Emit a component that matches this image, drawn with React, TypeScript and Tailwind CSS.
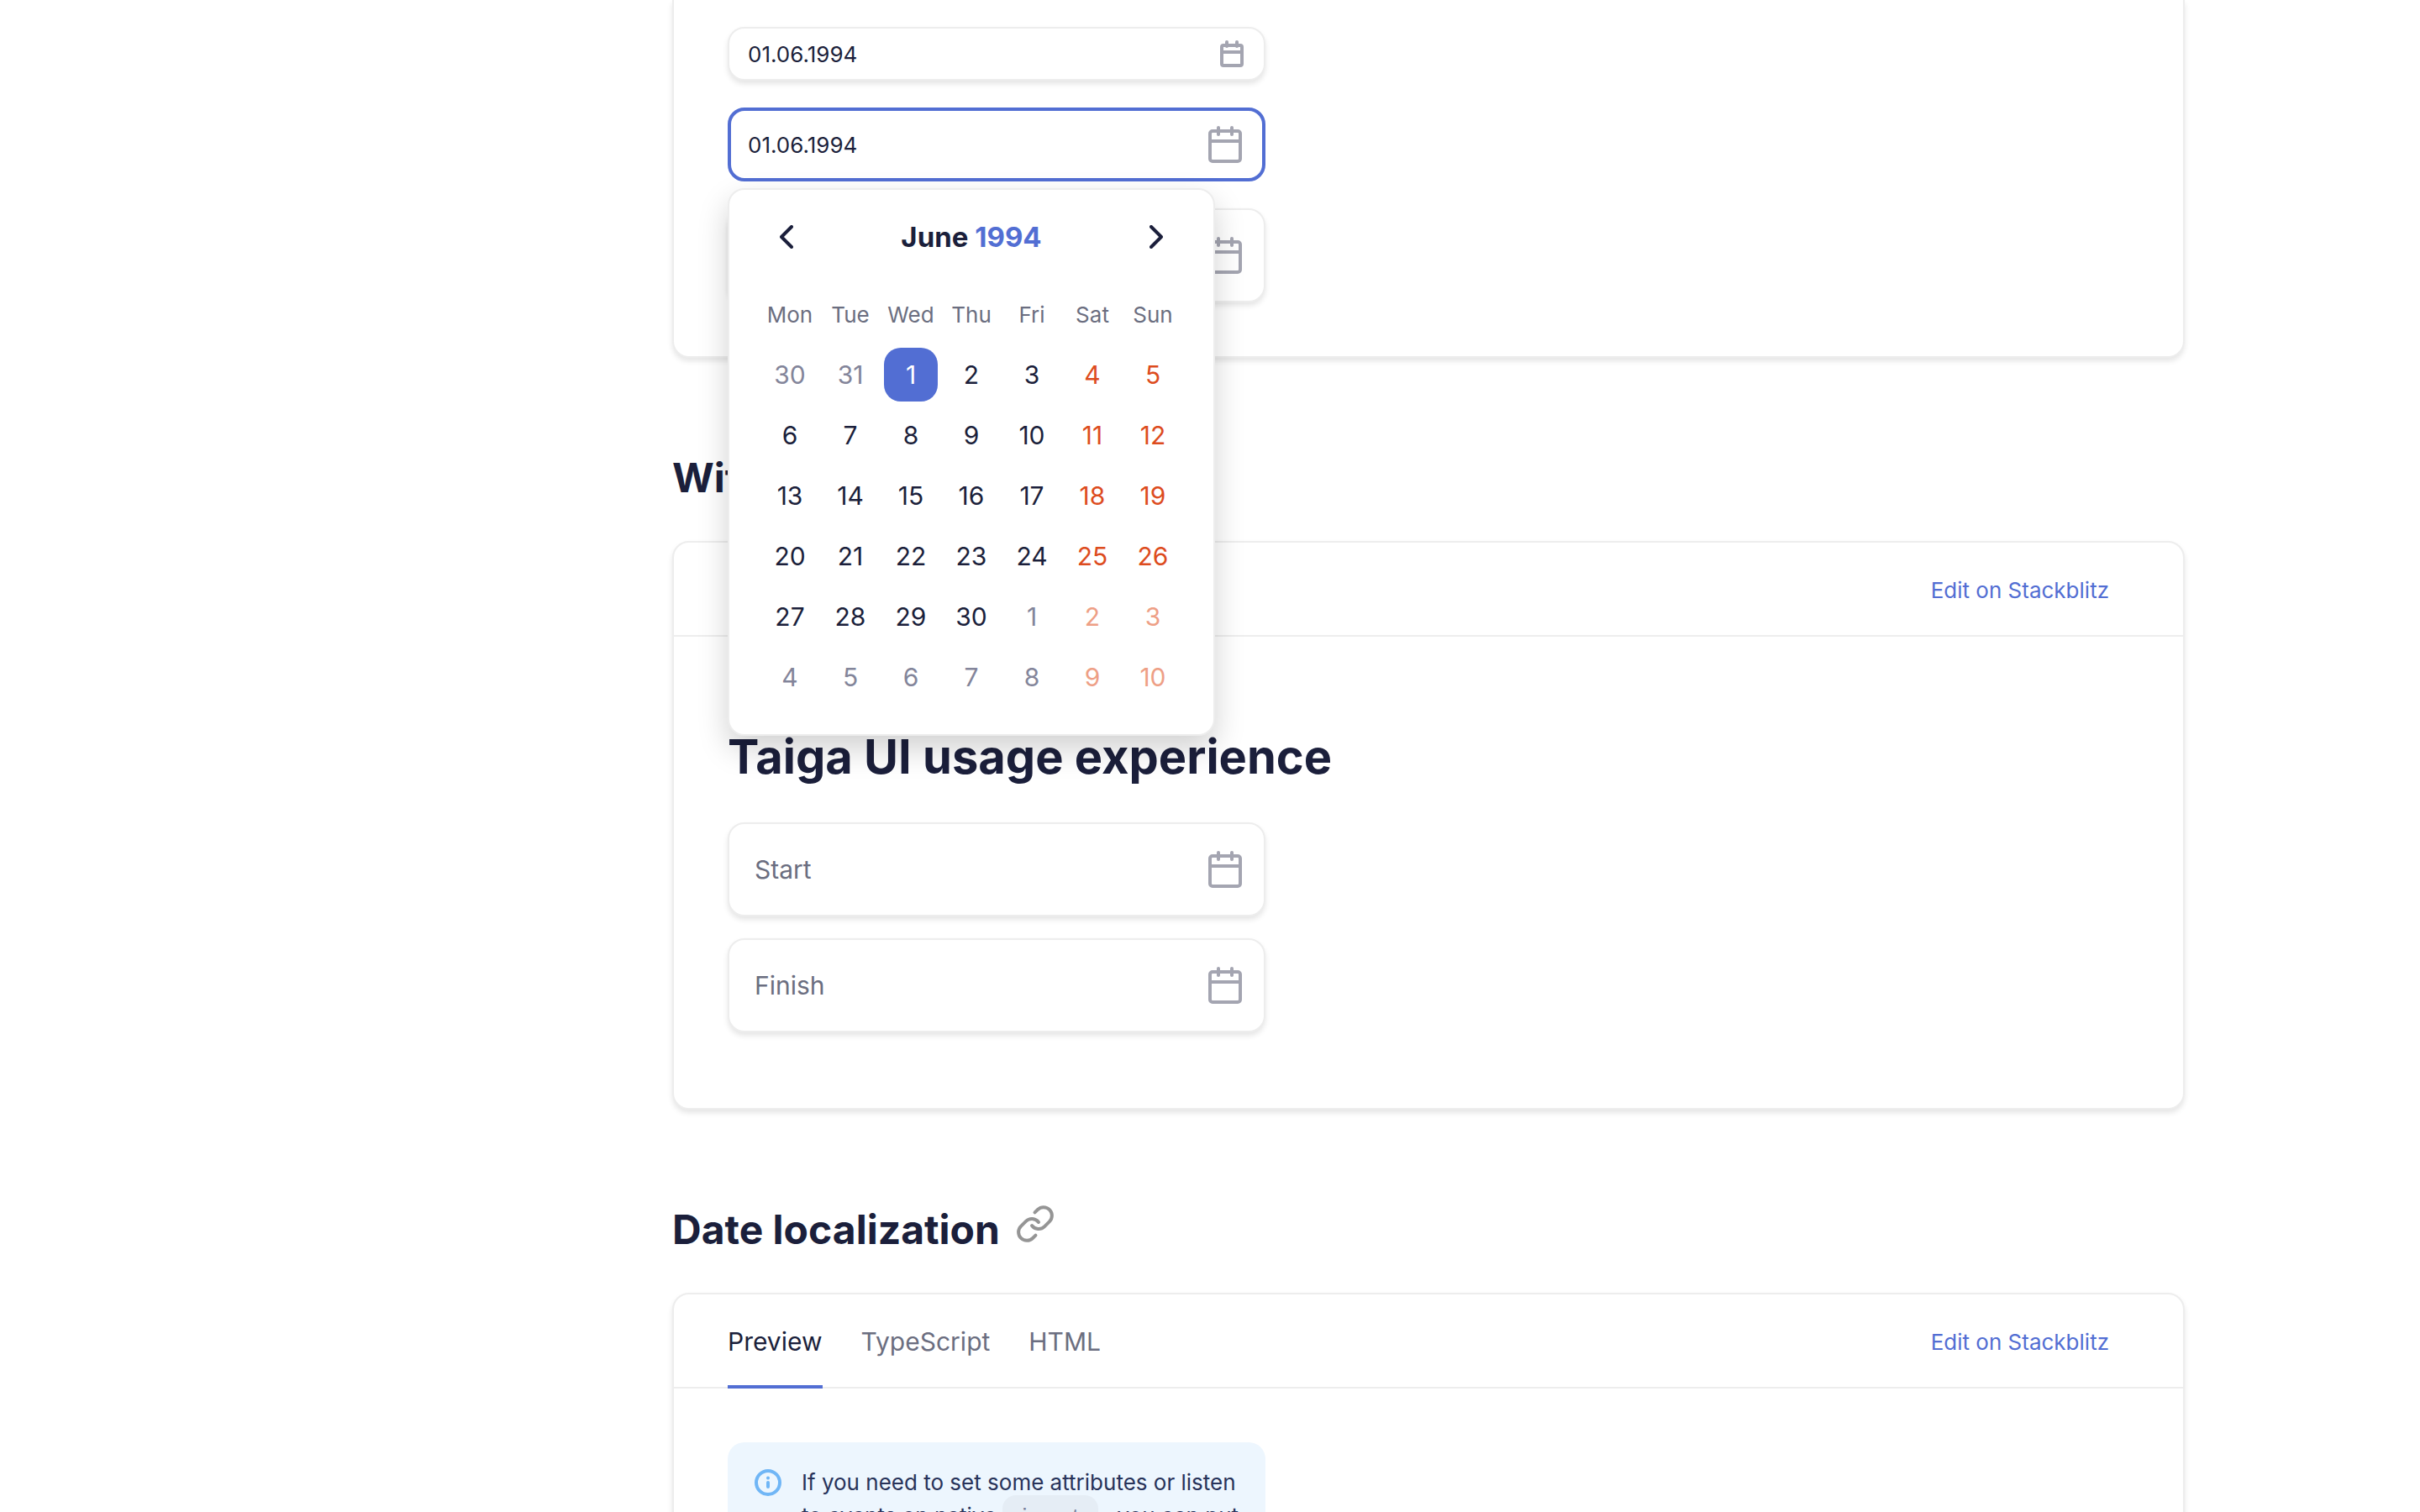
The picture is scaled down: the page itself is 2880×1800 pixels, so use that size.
import React from 'react'
import { Link as LinkIcon } from 'lucide-react'

const WEEKDAYS = ['Mon', 'Tue', 'Wed', 'Thu', 'Fri', 'Sat', 'Sun']
const WEEKS = [
  [30, 31, 1, 2, 3, 4, 5],
  [6, 7, 8, 9, 10, 11, 12],
  [13, 14, 15, 16, 17, 18, 19],
  [20, 21, 22, 23, 24, 25, 26],
  [27, 28, 29, 30, 1, 2, 3],
  [4, 5, 6, 7, 8, 9, 10],
]

function CalendarIcon({ small = false }: { small?: boolean }) {
  if (small) {
    return (
      <svg className="h-8 w-7" viewBox="0 0 28 32" fill="none" stroke="currentColor" strokeWidth="4" aria-hidden="true">
        <rect x="2" y="6" width="24" height="24" rx="2" />
        <path d="M2 14h24" />
        <path d="M8 2v5M20 2v5" strokeLinecap="round" />
      </svg>
    )
  }
  return (
    <svg className="h-11 w-10" viewBox="0 0 40 44" fill="none" stroke="currentColor" strokeWidth="4" aria-hidden="true">
      <rect x="2" y="6" width="36" height="36" rx="3" />
      <path d="M2 18h36" />
      <path d="M12 2v8M28 2v8" strokeLinecap="round" />
    </svg>
  )
}

type FieldProps = {
  label: string
  size: 's' | 'm' | 'l'
  value?: string
  placeholder?: string
  focused?: boolean
}

const FIELD_SIZE = {
  s: 'h-16 pl-[22px] pr-6 text-[26px]',
  m: 'h-[88px] pl-[20px] pr-6 text-[26px]',
  l: 'h-28 pl-[30px] pr-[26px] text-[30px]',
}

function DateField({ label, size, value, placeholder, focused = false }: FieldProps) {
  return (
    <div
      className={`flex items-center rounded-[20px] bg-white ${FIELD_SIZE[size]} ${
        focused ? 'border-4 border-[#526ed3]' : 'border-2 border-[#ededed] shadow-[0_4px_6px_rgba(0,0,0,0.1)]'
      }`}
    >
      <input
        type="text"
        aria-label={label}
        defaultValue={value}
        placeholder={placeholder}
        className="min-w-0 flex-1 bg-transparent text-[#1b1f3b] outline-none placeholder:text-[#6b6e80] placeholder:opacity-100"
      />
      <button type="button" aria-label={`Open calendar: ${label}`} className="text-[#a4a5b1]">
        <CalendarIcon small={size === 's'} />
      </button>
    </div>
  )
}

function dayColor(week: number, column: number, day: number) {
  const outside = (week === 0 && day > 20) || (week > 3 && day < 20)
  const weekend = column > 4
  if (week === 0 && day === 1) return 'bg-[#526ed3] text-white'
  if (weekend) return outside ? 'text-[#ee9f86]' : 'text-[#dd4c1e]'
  return outside ? 'text-[#83859a]' : 'text-[#1b1f3b]'
}

function Chevron({ d }: { d: string }) {
  return (
    <svg className="h-7 w-4" viewBox="0 0 16 28" fill="none" stroke="currentColor" strokeWidth="4" strokeLinecap="round" strokeLinejoin="round" aria-hidden="true">
      <path d={d} />
    </svg>
  )
}

function Calendar() {
  return (
    <div className="absolute top-full left-0 z-10 mt-2 rounded-[20px] border-2 border-[#ededed] bg-white px-9 pb-8 shadow-[0_16px_36px_rgba(0,0,0,0.18)]">
      <div className="flex h-28 items-center justify-between px-2">
        <button type="button" aria-label="Previous month" className="flex size-12 items-center justify-center">
          <Chevron d="M14 2 2 14l12 12" />
        </button>
        <div className="pt-0.5 text-[33px] font-bold">
          June{' '}
          <button type="button" className="text-[#526ed3]">
            1994
          </button>
        </div>
        <button type="button" aria-label="Next month" className="flex size-12 items-center justify-center">
          <Chevron d="m2 2 12 12L2 26" />
        </button>
      </div>
      <table className="w-[504px] table-fixed text-center text-[30px]">
        <thead>
          <tr className="h-18 text-[26px] text-[#6b6e80]">
            {WEEKDAYS.map((name) => (
              <th key={name} scope="col" className="p-0 font-normal">
                {name}
              </th>
            ))}
          </tr>
        </thead>
        <tbody>
          {WEEKS.map((days, week) => (
            <tr key={week}>
              {days.map((day, column) => (
                <td key={column} className="p-1">
                  <button type="button" className={`block size-16 rounded-[20px] ${dayColor(week, column, day)}`}>
                    {day}
                  </button>
                </td>
              ))}
            </tr>
          ))}
        </tbody>
      </table>
    </div>
  )
}

function SectionTitle({ children, link = false }: { children: React.ReactNode; link?: boolean }) {
  return (
    <h2 className="mt-[115px] mb-[47px] flex h-14 items-center gap-[18px] text-[48px] leading-14 font-bold">
      {children}
      {link && (
        <a href="#date-localization" aria-label="Link to this section" className="mb-3.5 text-[#959595]">
          <LinkIcon size={48} strokeWidth={2} />
        </a>
      )}
    </h2>
  )
}

const CARD = 'border-2 border-[#ededed] bg-white shadow-[0_4px_6px_rgba(0,0,0,0.1)]'

function CardHeader() {
  return (
    <header className="flex h-28 items-stretch justify-between border-b-2 border-[#ededed] pr-[88px] pl-16">
      <div role="tablist" className="-mb-0.5 flex gap-[46px] text-[30px] text-[#6b6e80]">
        <button type="button" role="tab" aria-selected="true" className="border-b-4 border-[#526ed3] pt-1 text-[#1b1f3b]">
          Preview
        </button>
        <button type="button" role="tab" aria-selected="false">
          TypeScript
        </button>
        <button type="button" role="tab" aria-selected="false">
          HTML
        </button>
      </div>
      <a href="#stackblitz" className="self-center pt-0.5 text-[26px] text-[#526ed3]">
        Edit on Stackblitz
      </a>
    </header>
  )
}

function InfoIcon() {
  return (
    <svg className="mt-1 size-8 shrink-0" viewBox="0 0 32 32" fill="none" stroke="#70b6f6" strokeWidth="4" strokeLinecap="round" aria-hidden="true">
      <circle cx="16" cy="16" r="14" />
      <path d="M16 16v5" />
      <circle cx="16" cy="10.5" r="2" fill="#70b6f6" stroke="none" />
    </svg>
  )
}

export default function App() {
  return (
    <div className="h-screen overflow-hidden bg-white font-['Inter',sans-serif] text-[#1b1f3b]">
      <main className="mr-[280px] ml-[800px]">
        <section className={`${CARD} rounded-b-[20px] border-t-0 px-16 pt-8 pb-16`}>
          <div className="flex w-[640px] flex-col gap-8">
            <DateField label="Small date" size="s" value="01.06.1994" />
            <div className="relative">
              <DateField label="Medium date" size="m" value="01.06.1994" focused />
              <Calendar />
            </div>
            <DateField label="Large date" size="l" />
          </div>
        </section>

        <SectionTitle>With value transformer</SectionTitle>
        <section className={`${CARD} rounded-[20px]`}>
          <CardHeader />
          <div className="px-16 pt-[109px] pb-[90px]">
            <h3 className="mb-11 text-[56px] leading-[68px] font-bold">Taiga UI usage experience</h3>
            <div className="flex w-[640px] flex-col gap-[26px]">
              <DateField label="Start date" size="l" placeholder="Start" />
              <DateField label="Finish date" size="l" placeholder="Finish" />
            </div>
          </div>
        </section>

        <SectionTitle link>Date localization</SectionTitle>
        <section className={`${CARD} rounded-[20px]`}>
          <CardHeader />
          <div className="p-16">
            <div className="flex w-[640px] gap-6 rounded-[20px] bg-[#edf6fe] pt-7 pr-4 pb-8 pl-8 text-[26px] leading-10 text-[#28335a]">
              <InfoIcon />
              <p>
                If you need to set some attributes or listen
                <br />
                to events on native{' '}
                <code className="rounded-2xl bg-[#e5edf5] px-[18px] py-3 font-['Liberation_Mono',monospace] text-[#78809a]">input</code> , you can put
              </p>
            </div>
          </div>
        </section>
      </main>
    </div>
  )
}
